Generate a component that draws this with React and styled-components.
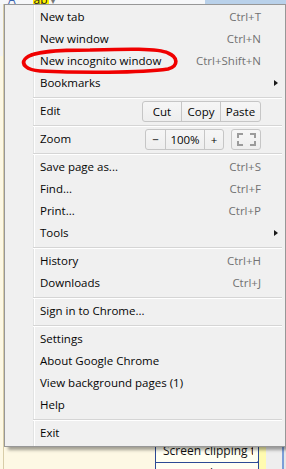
import React from "react";
import styled, { createGlobalStyle } from "styled-components";

const Global = createGlobalStyle`
  html, body { margin: 0; padding: 0; }
  body {
    width: 286px; height: 469px; overflow: hidden;
    background: #fdf8e4;
    font-family: "Segoe UI", "Open Sans", sans-serif;
  }
`;

const Screen = styled.div`
  position: relative;
  width: 286px;
  height: 469px;
  overflow: hidden;
  display: flex;
  flex-direction: column;
`;

/* ---------- background application ---------- */
const TopStrip = styled.div`
  display: flex;
  height: 4px;
  flex-shrink: 0;
  overflow: hidden;
`;
const Ribbon = styled.div`
  width: 205px;
  background: #f6f7f9;
  display: flex;
  align-items: flex-end;
`;
const RibbonGlyph = styled.span`
  font: 12px/12px "Open Sans", sans-serif;
  color: ${(p) => p.$color};
  background: ${(p) => p.$bg || "transparent"};
  margin-left: ${(p) => p.$ml}px;
  margin-bottom: -2px;
  padding: 0 1px;
`;
const TitleBlue = styled.div`
  flex: 1;
  background: #b9d1ea;
`;

const Body = styled.div`
  flex: 1;
  display: flex;
`;
const LeftEdge = styled.div`
  width: 3px;
  background: linear-gradient(#f4f4f4 0 52px, #fdf8e4 52px);
  border-right: 1px solid #d8cda8;
`;
const Canvas = styled.div`
  width: 151px;
  background: #fdf8e4;
`;
const PageList = styled.div`
  width: 104px;
  display: flex;
  flex-direction: column;
  padding-top: 436px;
  background: #fffde8;
`;
const PageTab = styled.div`
  position: relative;
  flex-shrink: 0;
  height: 23px;
  box-sizing: border-box;
  border: 1px solid #2c4b95;
  border-top: none;
  background: #fffff2;
  padding: 0 5px 0 7px;
  display: flex;
  align-items: center;
  &::after {
    content: "";
    position: absolute;
    right: -1px;
    bottom: -4px;
    width: 0; height: 0;
    border-top: 3px solid transparent;
    border-bottom: 3px solid transparent;
    border-right: 3px solid #2c4b95;
  }
`;
const PageTitle = styled.span`
  display: block;
  overflow: hidden;
  white-space: nowrap;
  font: 12px/16px "Segoe UI", "Open Sans", sans-serif;
  color: #111;
`;
const Strip = styled.div`
  width: ${(p) => p.$w}px;
  background: ${(p) => p.$c};
`;

/* ---------- context menu ---------- */
const Menu = styled.div`
  position: absolute;
  top: 4px;
  left: 4px;
  width: 282px;
  height: 443px;
  box-sizing: border-box;
  border: 1px solid #979797;
  padding: 1px 0 2px;
  background:
    linear-gradient(to right,
      transparent 28px, #e2e3e3 28px, #e2e3e3 29px,
      #ffffff 29px, #ffffff 30px, transparent 30px),
    #f0f0f0;
  box-shadow: 4px 3px 3px rgba(0, 0, 0, 0.36);
  font-family: "Segoe UI", "Open Sans", sans-serif;
  font-size: 11.5px;
  color: #050505;
`;
const Row = styled.div`
  display: flex;
  align-items: center;
  height: 22px;
  padding-left: 35px;
  line-height: 22px;
`;
const Label = styled.span`
  flex: 1;
  white-space: nowrap;
`;
const Shortcut = styled.span`
  color: #727272;
  white-space: nowrap;
`;
const ArrowSlot = styled.span`
  width: 24px;
  height: 22px;
  box-sizing: border-box;
  padding-left: 13px;
  display: flex;
  align-items: center;
`;
const Arrow = styled.span`
  width: 0; height: 0;
  border-top: 3.5px solid transparent;
  border-bottom: 3.5px solid transparent;
  border-left: 4px solid #1a1a1a;
`;
const Separator = styled.div`
  height: 6px;
  box-sizing: border-box;
  padding-top: 3px;
  &::before {
    content: "";
    display: block;
    margin: 0 3px 0 28px;
    border-top: 1px solid #d5d5d5;
    border-bottom: 1px solid #ffffff;
  }
`;
const Segmented = styled.div`
  display: flex;
  align-self: flex-end;
  height: 21px;
  box-sizing: border-box;
  border: 1px solid #c6c6c6;
  border-radius: 3px;
  background: linear-gradient(#f6f6f6, #eeeeee);
  overflow: hidden;
  margin-left: ${(p) => p.$ml || 0}px;
`;
const Seg = styled.span`
  width: ${(p) => p.$w}px;
  box-sizing: border-box;
  display: flex;
  align-items: center;
  justify-content: center;
  line-height: 19px;
  color: #050505;
  & + & { border-left: 1px solid #c6c6c6; }
`;

/* ---------- annotation ---------- */
const Annotation = styled.svg`
  position: absolute;
  left: 0;
  top: 0;
  pointer-events: none;
`;

function FullscreenIcon() {
  return (
    <svg width="19" height="13" viewBox="0 0 19 13">
      <path
        d="M1 5V1h5M13 1h5v4M18 8v4h-5M6 12H1V8"
        fill="none"
        stroke="#9b9b9b"
        strokeWidth="2"
      />
    </svg>
  );
}

const items = [
  { label: "New tab", sc: "Ctrl+T" },
  { label: "New window", sc: "Ctrl+N" },
  { label: "New incognito window", sc: "Ctrl+Shift+N" },
  { label: "Bookmarks", sub: true },
  "sep",
  { label: "Edit", kind: "edit" },
  "sep",
  { label: "Zoom", kind: "zoom" },
  "sep",
  { label: "Save page as...", sc: "Ctrl+S" },
  { label: "Find...", sc: "Ctrl+F" },
  { label: "Print...", sc: "Ctrl+P" },
  { label: "Tools", sub: true },
  "sep",
  { label: "History", sc: "Ctrl+H" },
  { label: "Downloads", sc: "Ctrl+J" },
  "sep",
  { label: "Sign in to Chrome..." },
  "sep",
  { label: "Settings" },
  { label: "About Google Chrome" },
  { label: "View background pages (1)" },
  { label: "Help" },
  "sep",
  { label: "Exit" },
];

function MenuRow({ item }) {
  if (item.kind === "edit") {
    return (
      <Row>
        <Label>{item.label}</Label>
        <Segmented>
          <Seg $w={38}>Cut</Seg>
          <Seg $w={39}>Copy</Seg>
          <Seg $w={40}>Paste</Seg>
        </Segmented>
        <ArrowSlot />
      </Row>
    );
  }
  if (item.kind === "zoom") {
    return (
      <Row>
        <Label>{item.label}</Label>
        <Segmented>
          <Seg $w={19}>−</Seg>
          <Seg $w={39}>100%</Seg>
          <Seg $w={19}>+</Seg>
        </Segmented>
        <Segmented $ml={7}>
          <Seg $w={28}>
            <FullscreenIcon />
          </Seg>
        </Segmented>
        <ArrowSlot />
      </Row>
    );
  }
  return (
    <Row>
      <Label>{item.label}</Label>
      {item.sc && <Shortcut>{item.sc}</Shortcut>}
      <ArrowSlot>{item.sub && <Arrow />}</ArrowSlot>
    </Row>
  );
}

export default function App() {
  return (
    <Screen>
      <Global />
      <TopStrip>
        <Ribbon>
          <RibbonGlyph $ml={7} $color="#3a63b0">A</RibbonGlyph>
          <RibbonGlyph $ml={16} $color="#222" $bg="#fff200">ab</RibbonGlyph>
          <RibbonGlyph $ml={0} $color="#777">▾</RibbonGlyph>
        </Ribbon>
        <TitleBlue />
      </TopStrip>
      <Body>
        <LeftEdge />
        <Canvas />
        <PageList>
          <PageTab>
            <PageTitle>Screen clipping taken: 5/21/2013</PageTitle>
          </PageTab>
          <PageTab>
            <PageTitle>Screen clipping taken: 5/21/2013</PageTitle>
          </PageTab>
        </PageList>
        <Strip $w={7} $c="#fffbb0" />
        <Strip $w={16} $c="#eeeeee" />
        <Strip $w={2} $c="#7c9ed8" />
        <Strip $w={2} $c="#e6e6e6" />
      </Body>

      <Menu>
        {items.map((it, i) =>
          it === "sep" ? <Separator key={i} /> : <MenuRow key={i} item={it} />
        )}
      </Menu>

      <Annotation width="286" height="469" viewBox="0 0 286 469">
        <path
          d="M26 58 C34 51 60 50 90 50 C125 49 158 48 168 53 C178 57 179 66 168 69 C140 73 80 73 40 71 C26 70 21 64 25 59 C28 55 36 53 46 52"
          fill="none"
          stroke="#f00000"
          strokeWidth="3.6"
          strokeLinecap="round"
          strokeLinejoin="round"
        />
      </Annotation>
    </Screen>
  );
}
